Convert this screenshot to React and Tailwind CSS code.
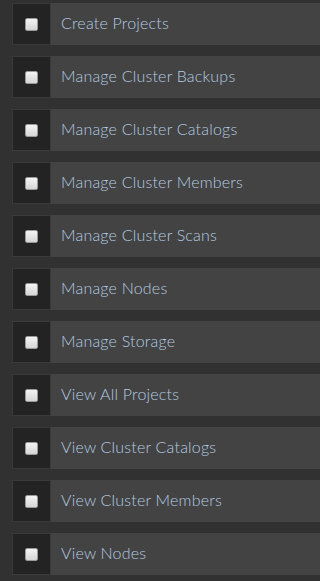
const PERMISSIONS = [
  'Create Projects',
  'Manage Cluster Backups',
  'Manage Cluster Catalogs',
  'Manage Cluster Members',
  'Manage Cluster Scans',
  'Manage Nodes',
  'Manage Storage',
  'View All Projects',
  'View Cluster Catalogs',
  'View Cluster Members',
  'View Nodes',
]

export default function App() {
  return (
    <div
      className="min-h-[581px] w-[320px] bg-[#313131] pt-[3px] pl-[12px]"
      style={{ fontFamily: 'Lato, "Open Sans", "Liberation Sans", sans-serif' }}
    >
      <div className="flex flex-col gap-[11px]">
        {PERMISSIONS.map((label) => (
          <label key={label} className="flex h-[42px] cursor-pointer">
            <div className="flex w-[39px] shrink-0 items-center justify-center border border-[#3a3a3a] bg-[#232323]">
              <span className="h-[13px] w-[13px] rounded-[2px] border border-[#9a9a9a] bg-gradient-to-b from-[#f4f4f4] to-[#d6d6d6]" />
            </div>
            <div className="flex flex-1 items-center bg-[#434343] pb-[2px] pl-[10px] text-[16px] font-light tracking-[0.2px] text-[#b4cbe2]">
              {label}
            </div>
          </label>
        ))}
      </div>
    </div>
  )
}
